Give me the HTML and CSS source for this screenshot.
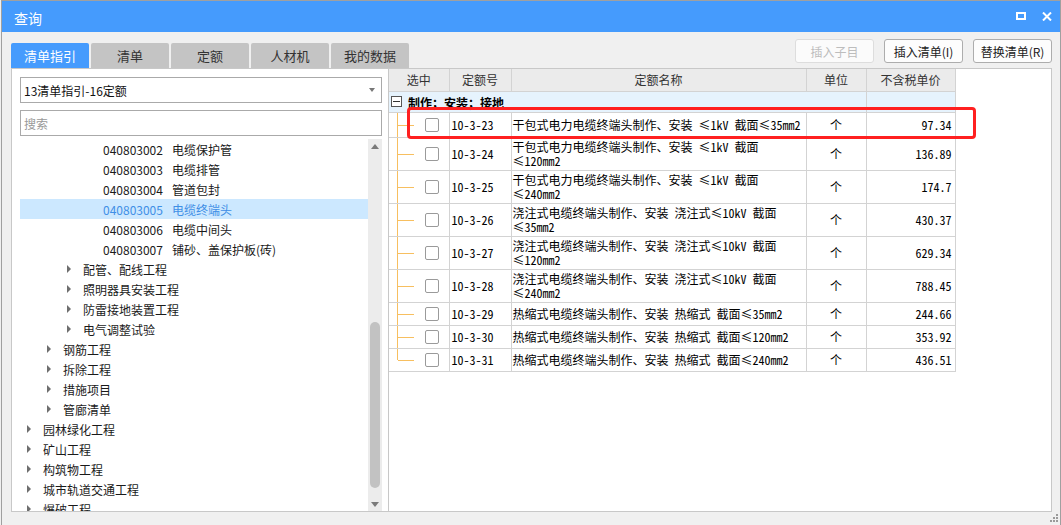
FILE: index.html
```
<!DOCTYPE html>
<html lang="zh">
<head>
<meta charset="utf-8">
<title>查询</title>
<link rel="stylesheet" href="styles.css">
</head>
<body>
<div class="window">
  <div class="titlebar">
    <span class="title">查询</span>
    <div class="winbtns">
      <svg class="ico-max" width="10" height="8" viewBox="0 0 10 8"><rect x="1" y="1" width="8" height="6" fill="none" stroke="#fff" stroke-width="2"/></svg>
      <svg class="ico-close" width="10" height="9" viewBox="0 0 10 9"><path d="M1 0.5 L9 8.5 M9 0.5 L1 8.5" stroke="#fff" stroke-width="2" fill="none"/></svg>
    </div>
  </div>

  <div class="toolbar">
    <div class="tabs">
      <div class="tab active">清单指引</div>
      <div class="tab">清单</div>
      <div class="tab">定额</div>
      <div class="tab">人材机</div>
      <div class="tab">我的数据</div>
    </div>
    <div class="actions">
      <button class="btn" disabled>插入子目</button>
      <button class="btn">插入清单(I)</button>
      <button class="btn">替换清单(R)</button>
    </div>
  </div>

  <div class="main">
    <div class="left">
      <div class="select"><span>13清单指引-16定额</span><i class="caret"></i></div>
      <input class="search" type="text" placeholder="搜索">
      <div class="treewrap">
        <ul class="tree">
          <li class="row l3"><span class="code">040803002</span>电缆保护管</li>
          <li class="row l3"><span class="code">040803003</span>电缆排管</li>
          <li class="row l3"><span class="code">040803004</span>管道包封</li>
          <li class="row l3 sel"><span class="code">040803005</span>电缆终端头</li>
          <li class="row l3"><span class="code">040803006</span>电缆中间头</li>
          <li class="row l3"><span class="code">040803007</span>铺砂、盖保护板(砖)</li>
          <li class="row l2"><i class="tri"></i>配管、配线工程</li>
          <li class="row l2"><i class="tri"></i>照明器具安装工程</li>
          <li class="row l2"><i class="tri"></i>防雷接地装置工程</li>
          <li class="row l2"><i class="tri"></i>电气调整试验</li>
          <li class="row l1"><i class="tri"></i>钢筋工程</li>
          <li class="row l1"><i class="tri"></i>拆除工程</li>
          <li class="row l1"><i class="tri"></i>措施项目</li>
          <li class="row l1"><i class="tri"></i>管廊清单</li>
          <li class="row l0"><i class="tri"></i>园林绿化工程</li>
          <li class="row l0"><i class="tri"></i>矿山工程</li>
          <li class="row l0"><i class="tri"></i>构筑物工程</li>
          <li class="row l0"><i class="tri"></i>城市轨道交通工程</li>
          <li class="row l0"><i class="tri"></i>爆破工程</li>
        </ul>
        <div class="vscroll">
          <span class="arr up"></span>
          <div class="track"><div class="thumb"></div></div>
          <span class="arr down"></span>
        </div>
      </div>
    </div>

    <div class="right">
      <table class="grid">
        <colgroup>
          <col class="c-sel"><col class="c-code"><col class="c-name"><col class="c-unit"><col class="c-price">
        </colgroup>
        <thead>
          <tr><th>选中</th><th>定额号</th><th>定额名称</th><th>单位</th><th>不含税单价</th></tr>
        </thead>
        <tbody>
          <tr class="group">
            <td colspan="4"><span class="minus"></span><b>制作；安装；接地</b></td>
            <td></td>
          </tr>
          <tr class="r1">
            <td class="sel"><span class="cb"></span></td>
            <td class="code">10-3-23</td>
            <td class="name"><div class="nm">干包式电力电缆终端头制作、安装 ≤1kV 截面≤35mm2</div></td>
            <td class="unit">个</td>
            <td class="price">97.34</td>
          </tr>
          <tr class="r2">
            <td class="sel"><span class="cb"></span></td>
            <td class="code">10-3-24</td>
            <td class="name"><div class="nm">干包式电力电缆终端头制作、安装 ≤1kV 截面</div><div class="nm">≤120mm2</div></td>
            <td class="unit">个</td>
            <td class="price">136.89</td>
          </tr>
          <tr class="r2">
            <td class="sel"><span class="cb"></span></td>
            <td class="code">10-3-25</td>
            <td class="name"><div class="nm">干包式电力电缆终端头制作、安装 ≤1kV 截面</div><div class="nm">≤240mm2</div></td>
            <td class="unit">个</td>
            <td class="price">174.7</td>
          </tr>
          <tr class="r2">
            <td class="sel"><span class="cb"></span></td>
            <td class="code">10-3-26</td>
            <td class="name"><div class="nm">浇注式电缆终端头制作、安装 浇注式≤10kV 截面</div><div class="nm">≤35mm2</div></td>
            <td class="unit">个</td>
            <td class="price">430.37</td>
          </tr>
          <tr class="r2">
            <td class="sel"><span class="cb"></span></td>
            <td class="code">10-3-27</td>
            <td class="name"><div class="nm">浇注式电缆终端头制作、安装 浇注式≤10kV 截面</div><div class="nm">≤120mm2</div></td>
            <td class="unit">个</td>
            <td class="price">629.34</td>
          </tr>
          <tr class="r2">
            <td class="sel"><span class="cb"></span></td>
            <td class="code">10-3-28</td>
            <td class="name"><div class="nm">浇注式电缆终端头制作、安装 浇注式≤10kV 截面</div><div class="nm">≤240mm2</div></td>
            <td class="unit">个</td>
            <td class="price">788.45</td>
          </tr>
          <tr class="r1s">
            <td class="sel"><span class="cb"></span></td>
            <td class="code">10-3-29</td>
            <td class="name"><div class="nm">热缩式电缆终端头制作、安装 热缩式 截面≤35mm2</div></td>
            <td class="unit">个</td>
            <td class="price">244.66</td>
          </tr>
          <tr class="r1s">
            <td class="sel"><span class="cb"></span></td>
            <td class="code">10-3-30</td>
            <td class="name"><div class="nm">热缩式电缆终端头制作、安装 热缩式 截面≤120mm2</div></td>
            <td class="unit">个</td>
            <td class="price">353.92</td>
          </tr>
          <tr class="r1s">
            <td class="sel last"><span class="cb"></span></td>
            <td class="code">10-3-31</td>
            <td class="name"><div class="nm">热缩式电缆终端头制作、安装 热缩式 截面≤240mm2</div></td>
            <td class="unit">个</td>
            <td class="price">436.51</td>
          </tr>
        </tbody>
      </table>
      <div class="mark"></div>
    </div>
  </div>

  <div class="footer">
    <svg class="grip" width="9" height="9" viewBox="0 0 9 9" fill="#9a9a9a">
      <rect x="7" y="1" width="2" height="2"/>
      <rect x="4" y="4" width="2" height="2"/><rect x="7" y="4" width="2" height="2"/>
      <rect x="1" y="7" width="2" height="2"/><rect x="4" y="7" width="2" height="2"/><rect x="7" y="7" width="2" height="2"/>
    </svg>
  </div>
</div>
</body>
</html>
```
FILE: styles.css
```
html, body {
  margin: 0;
  padding: 0;
}
body {
  background: #f0f0f0;
  font-family: "Noto Sans CJK SC", "Microsoft YaHei", sans-serif;
  font-size: 12px;
  color: #222;
  overflow: hidden;
}

.window {
  margin-left: 1px;
  height: 525px;
  box-sizing: border-box;
  border: 1px solid #a0a0a0;
  border-bottom: none;
  background: #f0f0f0;
  display: flex;
  flex-direction: column;
}

/* title bar */
.titlebar {
  height: 31px;
  flex: none;
  background: #459bfd;
  display: flex;
  align-items: center;
  justify-content: space-between;
  padding: 0 8px 0 12px;
}
.title {
  color: #fff;
  font-size: 14px;
  padding-top: 2px;
}
.winbtns {
  display: flex;
  align-items: center;
  gap: 16px;
  padding-bottom: 1px;
}
.ico-max, .ico-close { display: block; }

/* toolbar with tabs and buttons */
.toolbar {
  height: 36px;
  flex: none;
  display: flex;
  justify-content: space-between;
  align-items: flex-start;
  padding: 0 8px 0 9px;
}
.tabs {
  display: flex;
  gap: 2px;
  margin-top: 11px;
}
.tab {
  width: 78px;
  height: 25px;
  line-height: 25px;
  text-align: center;
  background: #c4c4c4;
  color: #333;
  border-radius: 2px 2px 0 0;
  font-size: 13px;
}
.tab.active {
  background: #459bfd;
  color: #fff;
}
.actions {
  display: flex;
  gap: 10px;
  margin-top: 7px;
}
.btn {
  width: 79px;
  height: 24px;
  box-sizing: border-box;
  border: 1px solid #adadad;
  border-radius: 3px;
  background: #fdfdfd;
  font-family: inherit;
  font-size: 12px;
  color: #222;
  padding: 0;
}
.btn:disabled {
  border-color: #dddddd;
  color: #bdbdbd;
  background: #fbfbfb;
}

/* main area */
.main {
  height: 444px;
  flex: none;
  display: flex;
  padding: 0 8px 0 9px;
}
.left {
  width: 378px;
  flex: none;
  box-sizing: border-box;
  border: 1px solid #c8c8c8;
  background: #fff;
  padding: 8px 6px 0 8px;
  display: flex;
  flex-direction: column;
}
.select {
  height: 26px;
  box-sizing: border-box;
  border: 1px solid #aaaaaa;
  display: flex;
  align-items: center;
  justify-content: space-between;
  padding: 0 6px 0 3px;
  font-size: 12px;
  color: #111;
  flex: none;
}
.caret {
  width: 0;
  height: 0;
  border-left: 3.5px solid transparent;
  border-right: 3.5px solid transparent;
  border-top: 4px solid #777;
}
.search {
  height: 26px;
  box-sizing: border-box;
  border: 1px solid #aaaaaa;
  margin: 7px 0 0 0;
  padding: 0 0 0 3px;
  font-family: inherit;
  font-size: 12px;
  outline: none;
  flex: none;
}
.search::placeholder { color: #999; }

.treewrap {
  flex: 1;
  min-height: 0;
  margin-top: 3px;
  display: flex;
  overflow: hidden;
}
.tree {
  list-style: none;
  margin: 0;
  padding: 0;
  flex: 1;
  overflow: hidden;
}
.row {
  height: 20px;
  display: flex;
  align-items: center;
  white-space: nowrap;
  color: #1a1a1a;
  font-size: 12px;
}
.row.l0 { padding-left: 7px; }
.row.l1 { padding-left: 27px; }
.row.l2 { padding-left: 47px; }
.row.l3 { padding-left: 83px; }
.row.sel {
  background: #cce8ff;
  color: #3f8fe6;
}
.code { margin-right: 9px; }
.tri {
  width: 0;
  height: 0;
  border-left: 4px solid #6e6e6e;
  border-top: 4px solid transparent;
  border-bottom: 4px solid transparent;
  margin-right: 12px;
}

.vscroll {
  width: 14px;
  flex: none;
  background: #ececec;
  display: flex;
  flex-direction: column;
  align-items: center;
}
.arr {
  height: 14px;
  flex: none;
  display: flex;
  align-items: center;
}
.arr::before {
  content: "";
  border-left: 4.5px solid transparent;
  border-right: 4.5px solid transparent;
}
.arr.up::before { border-bottom: 5px solid #7a7a7a; }
.arr.down::before { border-top: 5px solid #7a7a7a; }
.track {
  flex: 1;
  width: 10px;
}
.thumb {
  margin-top: 169px;
  height: 166px;
  width: 10px;
  border-radius: 5px;
  background: #c2c2c2;
}

/* right panel */
.right {
  flex: 1;
  box-sizing: border-box;
  border: 1px solid #c8c8c8;
  border-left: none;
  background: #fff;
  position: relative;
}
.grid {
  border-collapse: collapse;
  table-layout: fixed;
  width: 566px;
  font-family: "Noto Sans Mono CJK SC", "Noto Sans CJK SC", monospace;
  font-size: 12px;
  line-height: 14px;
  color: #000;
}
.c-sel { width: 60px; }
.c-code { width: 62px; }
.c-name { width: 295px; }
.c-unit { width: 60px; }
.c-price { width: 89px; }

.grid th, .grid td {
  border: 1px solid #d3d3d3;
  padding: 0;
  white-space: nowrap;
}
.grid tr > :first-child { border-left: none; }
.grid thead tr > * { border-top: none; }
.grid th {
  height: 22px;
  background: #ebebeb;
  font-family: "Noto Sans CJK SC", sans-serif;
  font-weight: normal;
  color: #333;
  text-align: center;
}
.group td {
  height: 20px;
  background: #e6f3fd;
  border-bottom: none;
  vertical-align: middle;
}
.group td:first-child {
  padding-left: 2px;
}
.minus {
  display: inline-block;
  vertical-align: middle;
  width: 11px;
  height: 11px;
  box-sizing: border-box;
  border: 1px solid #555;
  background: #fff linear-gradient(#333, #333) center / 7px 1px no-repeat;
  margin-right: 6px;
  position: relative;
  top: -1px;
}
.group b {
  font-weight: bold;
  vertical-align: middle;
}
.r1 td { height: 24px; }
.r1s td { height: 22px; }
.r2 td { height: 32px; }

.grid td.sel {
  padding-left: 36px;
  background:
    linear-gradient(#f7bf60, #f7bf60) 8px 0 / 1px 100% no-repeat,
    linear-gradient(#f7bf60, #f7bf60) 9px 50% / 16px 1px no-repeat;
}
.grid td.sel.last {
  background:
    linear-gradient(#f7bf60, #f7bf60) 8px 0 / 1px 50% no-repeat,
    linear-gradient(#f7bf60, #f7bf60) 9px 50% / 16px 1px no-repeat;
}
.cb {
  display: block;
  width: 14px;
  height: 14px;
  box-sizing: border-box;
  border: 1px solid #9a9a9a;
  border-radius: 2px;
  background: #fff;
}
.grid td.code { padding-left: 2px; }
.grid td.name { padding-left: 1px; }
.nm {
  height: 14px;
  line-height: 14px;
}
.r2 td.name { vertical-align: top; }
.r2 td.name .nm:first-child { margin-top: 2px; }
.grid td.unit { text-align: center; }
.grid td.price { text-align: right; padding-right: 3px; }

.mark {
  position: absolute;
  left: 18px;
  top: 38px;
  width: 569px;
  height: 32px;
  box-sizing: border-box;
  border: 3px solid #ff2020;
  border-radius: 4px;
}

.footer {
  flex: 1;
  display: flex;
  justify-content: flex-end;
  align-items: flex-end;
  padding: 0 2px 3px 0;
}
.grip { display: block; }
```
